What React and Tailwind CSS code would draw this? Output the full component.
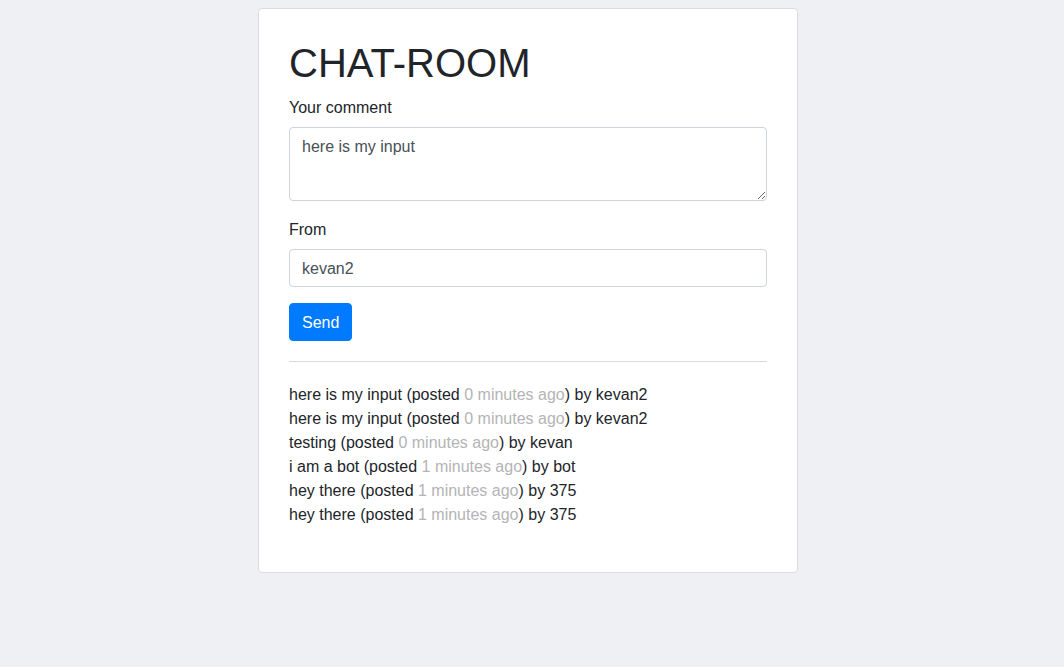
import React from "react";

const msgs = [
  ["here is my input", "0", "kevan2"],
  ["here is my input", "0", "kevan2"],
  ["testing", "0", "kevan"],
  ["i am a bot", "1", "bot"],
  ["hey there", "1", "375"],
  ["hey there", "1", "375"],
];

export default function App() {
  return (
    <div
      className="min-h-[667px] bg-[#eef0f4] pt-2 text-[16px] leading-[24px] text-[#212529]"
      style={{ fontFamily: '"Liberation Sans", Arial, sans-serif' }}
    >
      <div className="ml-[258px] w-[540px] rounded-[4px] border border-[#dcdcdc] bg-white p-[30px]">
        <h1 className="mb-2 text-[40px] leading-[48px] font-normal">CHAT-ROOM</h1>
        <div className="mb-4">
          <label className="mb-2 block h-[24px] pt-[1px] leading-[24px]">Your comment</label>
          <textarea
            className="block h-[74px] w-full rounded-[4px] border border-[#ced4da] px-3 pt-[7px] pb-[5px] text-[#495057] outline-none"
            defaultValue="here is my input"
          />
        </div>
        <div className="mb-4">
          <label className="mb-2 block h-[24px] pt-[1px] leading-[24px]">From</label>
          <input
            className="block h-[38px] w-full rounded-[4px] border border-[#ced4da] px-3 pt-[7px] pb-[5px] text-[#495057] outline-none"
            defaultValue="kevan2"
          />
        </div>
        <button className="h-[38px] rounded-[4px] border border-[#007bff] bg-[#007bff] px-3 pt-[1px] text-white">
          Send
        </button>
        <hr className="mt-5 mb-5 border-t border-[#d9d9d9]" />
        <div className="mb-[15px] pt-[1px]">
          {msgs.map((m, i) => (
            <div key={i} className="h-[24px]">
              {m[0]} (posted <span className="text-[#b4b4b4]">{m[1]} minutes ago</span>) by {m[2]}
            </div>
          ))}
        </div>
      </div>
    </div>
  );
}
